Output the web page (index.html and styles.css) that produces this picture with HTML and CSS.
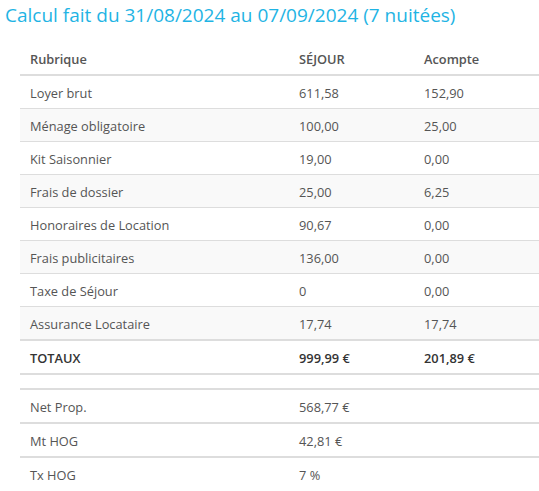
FILE: index.html
```html
<!DOCTYPE html>
<html lang="fr">
<head>
<meta charset="utf-8">
<title>Calcul</title>
<link rel="stylesheet" href="styles.css">
</head>
<body>
<h3 class="title">Calcul fait du 31/08/2024 au 07/09/2024 (7 nuitées)</h3>
<div class="wrap">
<table class="calc">
  <colgroup><col class="c1"><col class="c2"><col class="c3"></colgroup>
  <thead>
    <tr><th>Rubrique</th><th>SÉJOUR</th><th>Acompte</th></tr>
  </thead>
  <tbody class="lines">
    <tr><td>Loyer brut</td><td>611,58</td><td>152,90</td></tr>
    <tr><td>Ménage obligatoire</td><td>100,00</td><td>25,00</td></tr>
    <tr><td>Kit Saisonnier</td><td>19,00</td><td>0,00</td></tr>
    <tr><td>Frais de dossier</td><td>25,00</td><td>6,25</td></tr>
    <tr><td>Honoraires de Location</td><td>90,67</td><td>0,00</td></tr>
    <tr><td>Frais publicitaires</td><td>136,00</td><td>0,00</td></tr>
    <tr><td>Taxe de Séjour</td><td>0</td><td>0,00</td></tr>
    <tr><td>Assurance Locataire</td><td>17,74</td><td>17,74</td></tr>
  </tbody>
  <tbody class="totals">
    <tr><td>TOTAUX</td><td>999,99 €</td><td>201,89 €</td></tr>
    <tr class="spacer"><td></td><td></td><td></td></tr>
    <tr><td class="plain">Net Prop.</td><td class="plain">568,77 €</td><td class="plain"></td></tr>
    <tr><td class="plain">Mt HOG</td><td class="plain">42,81 €</td><td class="plain"></td></tr>
    <tr><td class="plain">Tx HOG</td><td class="plain">7 %</td><td class="plain"></td></tr>
  </tbody>
</table>
</div>
</body>
</html>
```
FILE: styles.css
```css
html, body {
  margin: 0;
  padding: 0;
  background: #fff;
}
body {
  font-family: "Open Sans", "Noto Sans", sans-serif;
  color: #555;
}
.title {
  margin: 0;
  padding: 4px 0 0 5px;
  font-size: 19px;
  line-height: 22px;
  font-weight: 400;
  color: #1fb4e4;
}
.wrap {
  padding: 16px 0 0 20px;
}
.calc {
  width: 519px;
  border-collapse: collapse;
  table-layout: fixed;
  font-size: 12.8px;
}
.c1 { width: 269px; }
.c2 { width: 125px; }
.c3 { width: 125px; }
.calc th,
.calc td {
  padding: 9px 10px 7px;
  line-height: 16px;
  text-align: left;
  vertical-align: top;
  white-space: nowrap;
}
.calc th {
  font-weight: 600;
  color: #555;
  border-bottom: 2px solid #ddd;
}
.lines td {
  border-top: 1px solid #ddd;
}
.lines tr:nth-child(even) td {
  background: #f9f9f9;
}
.totals td {
  border-top: 2px solid #ddd;
  font-weight: 600;
  color: #333;
}
.totals .spacer td {
  padding: 0;
  height: 13px;
  border-bottom: 2px solid #ddd;
}
.totals td.plain {
  font-weight: 400;
  color: #555;
}
```
